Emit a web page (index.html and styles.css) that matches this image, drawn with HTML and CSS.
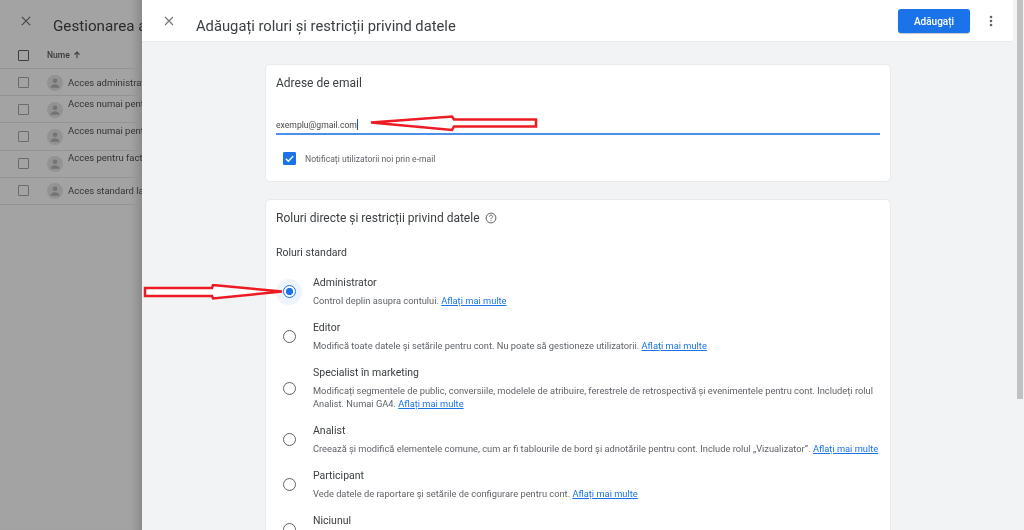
FILE: index.html
```html
<!DOCTYPE html>
<html lang="ro">
<head>
<meta charset="utf-8">
<title>Adăugați roluri și restricții privind datele</title>
<link rel="stylesheet" href="styles.css">
</head>
<body>
<div class="app">
  <aside class="under">
    <div class="under-head">
      <svg class="under-close" viewBox="0 0 12 12"><path d="M1 1l10 10M11 1L1 11"/></svg>
      <span class="under-title">Gestionarea accesului la cont</span>
    </div>
    <div class="under-cols">
      <span class="box box-strong"></span>
      <span class="col-name">Nume</span>
      <svg class="sort" viewBox="0 0 10 10"><path d="M5 9V1.5M1.8 4.5L5 1.3l3.2 3.2"/></svg>
    </div>
    <div class="under-row"><span class="box"></span><svg class="avatar" viewBox="0 0 16 16"><circle cx="8" cy="8" r="8" class="av-bg"/><circle cx="8" cy="5.8" r="2.3" class="av-fg"/><path d="M3.6 12.2c0-2 2.6-3 4.4-3s4.4 1 4.4 3v.6H3.6z" class="av-fg"/></svg><span class="row-text mid">Acces administrator la cont</span></div>
    <div class="under-row"><span class="box"></span><svg class="avatar" viewBox="0 0 16 16"><circle cx="8" cy="8" r="8" class="av-bg"/><circle cx="8" cy="5.8" r="2.3" class="av-fg"/><path d="M3.6 12.2c0-2 2.6-3 4.4-3s4.4 1 4.4 3v.6H3.6z" class="av-fg"/></svg><span class="row-text">Acces numai pentru citire</span></div>
    <div class="under-row"><span class="box"></span><svg class="avatar" viewBox="0 0 16 16"><circle cx="8" cy="8" r="8" class="av-bg"/><circle cx="8" cy="5.8" r="2.3" class="av-fg"/><path d="M3.6 12.2c0-2 2.6-3 4.4-3s4.4 1 4.4 3v.6H3.6z" class="av-fg"/></svg><span class="row-text">Acces numai pentru analiză</span></div>
    <div class="under-row"><span class="box"></span><svg class="avatar" viewBox="0 0 16 16"><circle cx="8" cy="8" r="8" class="av-bg"/><circle cx="8" cy="5.8" r="2.3" class="av-fg"/><path d="M3.6 12.2c0-2 2.6-3 4.4-3s4.4 1 4.4 3v.6H3.6z" class="av-fg"/></svg><span class="row-text">Acces pentru facturare</span></div>
    <div class="under-row"><span class="box"></span><svg class="avatar" viewBox="0 0 16 16"><circle cx="8" cy="8" r="8" class="av-bg"/><circle cx="8" cy="5.8" r="2.3" class="av-fg"/><path d="M3.6 12.2c0-2 2.6-3 4.4-3s4.4 1 4.4 3v.6H3.6z" class="av-fg"/></svg><span class="row-text mid">Acces standard la cont</span></div>
  </aside>

  <main class="panel">
    <header class="topbar">
      <svg class="close" viewBox="0 0 12 12"><path d="M1.2 1.2l9.6 9.6M10.8 1.2l-9.6 9.6"/></svg>
      <h1 class="title">Adăugați roluri și restricții privind datele</h1>
      <button class="add">Adăugați</button>
      <svg class="more" viewBox="0 0 4 12"><circle cx="2" cy="2" r="1.3"/><circle cx="2" cy="6" r="1.3"/><circle cx="2" cy="10" r="1.3"/></svg>
    </header>
    <div class="content">
      <section class="card card-email">
        <h2 class="card-title">Adrese de email</h2>
        <div class="field"><span class="email">exemplu@gmail.com</span><span class="caret"></span></div>
        <label class="notify">
          <svg class="check" viewBox="0 0 12 12"><rect width="12" height="12" rx="1.2" class="check-bg"/><path d="M2.6 6.2l2.4 2.4 4.4-4.8" class="check-mark"/></svg>
          <span>Notificați utilizatorii noi prin e-mail</span>
        </label>
      </section>
      <section class="card card-roles">
        <h2 class="card-title with-help">Roluri directe și restricții privind datele
          <svg class="help" viewBox="0 0 12 12"><circle cx="6" cy="6" r="4.9"/><path d="M4.4 4.8C4.4 3.8 5.1 3.2 6 3.2s1.6.6 1.6 1.4C7.600 5.800 6 5.700 6 7.200"/><path d="M6 8.200v1"/></svg>
        </h2>
        <h3 class="sub">Roluri standard</h3>
        <div class="role">
          <span class="radio-wrap radio-halo"><span class="radio radio-on"></span></span>
          <div class="role-text"><div class="role-name">Administrator</div><p class="role-desc">Control deplin asupra contului. <a href="#">Aflați mai multe</a></p></div>
        </div>
        <div class="role">
          <span class="radio-wrap"><span class="radio"></span></span>
          <div class="role-text"><div class="role-name">Editor</div><p class="role-desc">Modifică toate datele și setările pentru cont. Nu poate să gestioneze utilizatorii. <a href="#">Aflați mai multe</a></p></div>
        </div>
        <div class="role">
          <span class="radio-wrap"><span class="radio"></span></span>
          <div class="role-text"><div class="role-name">Specialist în marketing</div><p class="role-desc">Modificați segmentele de public, conversiile, modelele de atribuire, ferestrele de retrospectivă și evenimentele pentru cont. Includeți rolul Analist. Numai GA4. <a href="#">Aflați mai multe</a></p></div>
        </div>
        <div class="role">
          <span class="radio-wrap"><span class="radio"></span></span>
          <div class="role-text"><div class="role-name">Analist</div><p class="role-desc">Creează și modifică elementele comune, cum ar fi tablourile de bord și adnotările pentru cont. Include rolul „Vizualizator”. <a href="#">Aflați mai multe</a></p></div>
        </div>
        <div class="role">
          <span class="radio-wrap"><span class="radio"></span></span>
          <div class="role-text"><div class="role-name">Participant</div><p class="role-desc">Vede datele de raportare și setările de configurare pentru cont. <a href="#">Aflați mai multe</a></p></div>
        </div>
        <div class="role">
          <span class="radio-wrap"><span class="radio"></span></span>
          <div class="role-text"><div class="role-name">Niciunul</div><p class="role-desc">Nu are roluri atribuite.</p></div>
        </div>
      </section>
    </div>
  </main>
  <div class="scrollbar"><div class="thumb"></div></div>

  <svg class="annot annot-email" viewBox="0 0 170 18"><path d="M2 8.500L83 2.500 85 5.500H167V12.500H85L83 16Z"/></svg>
  <svg class="annot annot-radio" viewBox="0 0 142 16"><path d="M2 4H69L70 1 139 7.500 70 14.500 69 12H2Z"/></svg>
</div>
</body>
</html>
```
FILE: styles.css
```css
* { box-sizing: border-box; }
html, body { margin: 0; height: 100%; overflow: hidden; }
body { font-family: Roboto, "Liberation Sans", sans-serif; background: #f1f3f4; color: #3c4043; }
.app { position: relative; display: flex; width: 1024px; height: 530px; overflow: hidden; filter: blur(.35px); }

.under { flex: 0 0 142px; width: 142px; height: 530px; overflow: hidden; background: #a3a3a3; white-space: nowrap; box-shadow: inset -12px 0 10px -8px rgba(0,0,0,.18); }
.under-head { display: flex; align-items: center; height: 42px; padding: 4px 0 0 21px; }
.under-close { width: 10px; height: 10px; margin-top: -4px; flex: none; }
.under-close path { fill: none; stroke: #474747; stroke-width: 1.4; }
.under-title { margin: 6px 0 0 22px; font-size: 15.200px; color: #2b2b2b; }
.under-cols { display: flex; align-items: center; height: 27px; padding-left: 18px; border-bottom: 1px solid #939393; }
.col-name { margin-left: 18px; font-size: 8.500px; font-weight: 500; color: #3a3a3a; }
.sort { width: 8px; height: 8px; margin-left: 3px; }
.sort path { fill: none; stroke: #3a3a3a; stroke-width: 1.3; }
.box { flex: none; width: 11px; height: 11px; border: 1.4px solid #6b6b6b; border-radius: 1px; }
.box-strong { border-color: #3d3d3d; }
.under-row { display: flex; align-items: center; height: 27.2px; padding-left: 18px; border-bottom: 1px solid #939393; }
.avatar { flex: none; width: 16px; height: 16px; margin-left: 18px; margin-top: 1px; }
.av-bg { fill: #939393; }
.av-fg { fill: #747474; }
.row-text { margin-left: 5px; margin-top: -12px; font-size: 9.500px; color: #333; }
.row-text.mid { margin-top: 0; }

.panel { flex: none; width: 875px; height: 530px; display: flex; flex-direction: column; overflow: hidden; background: #f1f3f4; }
.topbar { flex: none; display: flex; align-items: center; height: 42px; margin-right: 4px; padding: 0 0 0 22px; background: #fff; border-bottom: 1px solid #e8eaed; }
.close { width: 10px; height: 10px; flex: none; }
.close path { fill: none; stroke: #6f7377; stroke-width: 1.3; }
.title { margin: 10px 0 0 22px; flex: 1; font-size: 14.750px; font-weight: 400; color: #3c4043; }
.add { width: 72px; height: 24px; margin-top: 1px; border: 0; border-radius: 3px; background: #1a73e8; color: #fff; font: 500 10px Roboto, "Liberation Sans", sans-serif; box-shadow: 0 1px 1px rgba(60,64,67,.3); }
.more { width: 4px; height: 12px; margin: 1px 20px 0 19px; fill: #5f6368; }

.content { flex: 1; padding: 22px 126px 0 123px; display: flex; flex-direction: column; gap: 17px; }
.card { background: #fff; border: 1px solid #e8eaed; border-radius: 5px; padding: 0 10px; }
.card-email { height: 118px; flex: none; }
.card-roles { flex: none; height: 600px; }
.card-title { margin: 0; padding-top: 11px; font-size: 12px; line-height: 14px; font-weight: 400; color: #3c4043; }
.field { display: flex; align-items: center; height: 19px; margin-top: 26px; border-bottom: 2px solid #4a90ea; font-size: 8.650px; color: #4a4a4a; }
.caret { width: 1px; height: 11px; background: #2a5a9a; }
.notify { display: flex; align-items: center; margin: 17px 0 0 7px; font-size: 8.600px; color: #5f6368; }
.check { width: 13px; height: 13px; flex: none; margin-right: 9px; }
.check-bg { fill: #1a73e8; }
.check-mark { fill: none; stroke: #fff; stroke-width: 1.3; }

.with-help { display: flex; align-items: center; gap: 5px; }
.help { width: 12px; height: 12px; margin-top: -1px; }
.help circle, .help path { fill: none; stroke: #5f6368; stroke-width: 1; }
.sub { margin: 21px 0 0; font-size: 10.500px; line-height: 13px; font-weight: 400; color: #3c4043; }
.role { display: flex; margin-top: 12px; align-items: center; }
.sub + .role { margin-top: 15px; }
.radio-wrap { flex: none; display: flex; align-items: center; justify-content: center; width: 26px; height: 26px; margin-top: 2px; border-radius: 50%; }
.radio-halo { background: #eef4fd; }
.radio { width: 13px; height: 13px; border: 1.4px solid #5f6368; border-radius: 50%; }
.radio-on { border-color: #1a73e8; background: radial-gradient(circle, #1a73e8 0 3.4px, #fff 3.9px); }
.role-text { margin-left: 11px; }
.role-name { font-size: 10.500px; line-height: 18px; color: #3c4043; }
.role-desc { margin: 0; font-size: 9.300px; line-height: 13px; padding-top: 2px; color: #5f6368; }
.role-desc a { color: #1a73e8; text-decoration: underline; }

.scrollbar { flex: none; width: 7px; height: 530px; background: #f1f3f4; }
.thumb { width: 6px; height: 399px; background: #c1c1c1; }

.annot { position: absolute; fill: #fff; stroke: #ed1c24; stroke-width: 2.500; }
.annot-email { left: 369px; top: 114px; width: 170px; height: 18px; }
.annot-radio { left: 143px; top: 284px; width: 142px; height: 16px; }
```
